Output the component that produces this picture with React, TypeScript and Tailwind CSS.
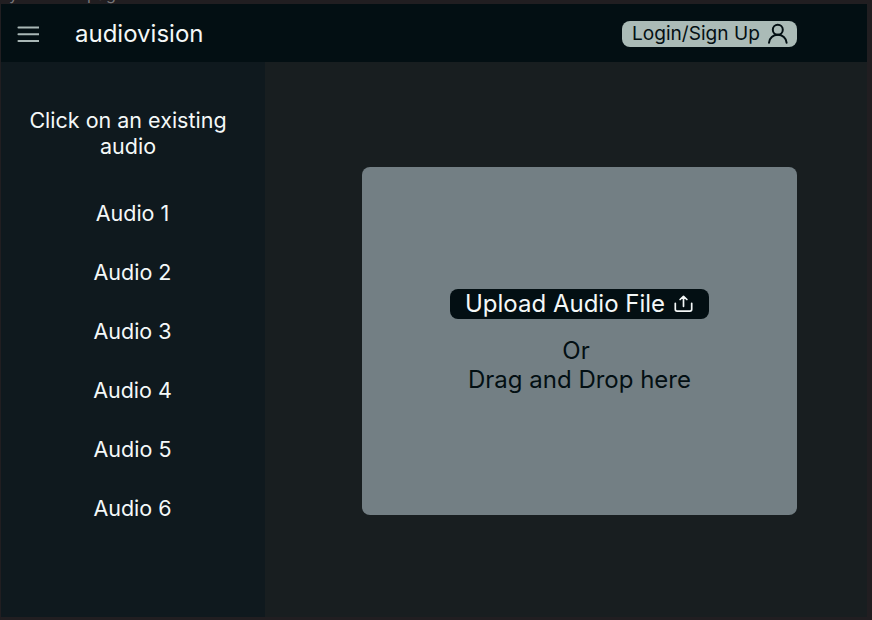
const audios = ['Audio 1', 'Audio 2', 'Audio 3', 'Audio 4', 'Audio 5', 'Audio 6'];

function MenuIcon() {
  return (
    <svg className="h-[18px] w-[24px]" viewBox="0 0 24 18" fill="none" stroke="#a9b8b6" strokeWidth="2.1" strokeLinecap="round">
      <path d="M3.5 2.5H23.5M3.5 9.3H23.5M3.5 16H23.5" />
    </svg>
  );
}

function UserIcon() {
  return (
    <svg className="h-[22px] w-[22px]" viewBox="0 0 22 22" fill="none" stroke="#030f13" strokeWidth="2" strokeLinecap="round">
      <circle cx="10.8" cy="6.8" r="5" />
      <path d="M2 19.8C2.3 15 6.2 11.8 10.8 11.8S19.3 15 19.6 19.8" />
    </svg>
  );
}

function UploadIcon() {
  return (
    <svg className="h-[18px] w-[20px]" viewBox="0 0 20 18" fill="none" stroke="#f4f8f8" strokeWidth="1.7" strokeLinecap="round" strokeLinejoin="round">
      <path d="M10.5 11.3V1.5M7.1 4.5L10.5 1.3L13.9 4.5M2.3 8.3V14.3Q2.3 16.1 4.1 16.1H16.9Q18.7 16.1 18.7 14.3V8.3" />
    </svg>
  );
}

export default function App() {
  return (
    <div className="flex h-[620px] w-[872px] flex-col overflow-hidden bg-[#211e21] pr-[5px] pb-[3px] pl-px font-['Inter',sans-serif]">
      <div className="flex h-[4px] shrink-0 items-end overflow-hidden pl-[8px] text-[16px] leading-[10px] text-[#77767a]">
        <span className="mb-[5px] w-[78px]">y</span>
        <span className="mb-[5px]">page</span>
      </div>
      <header className="flex h-[58px] shrink-0 items-center bg-[#030f13] pt-px pr-[70px] pl-[14px]">
        <MenuIcon />
        <h1 className="ml-[36px] text-[24px] leading-[29px] text-[#f4f8f8]">audiovision</h1>
        <button className="mt-px ml-auto flex h-[26px] w-[175px] items-center rounded-[8px] bg-[#abbbb7] pl-[10px] text-left text-[19.1px] leading-[24px] whitespace-nowrap text-[#030f13]">
          <span className="-mt-[2px] w-[135px]">Login/Sign Up</span>
          <UserIcon />
        </button>
      </header>
      <div className="flex flex-1">
        <aside className="flex w-[264px] flex-col items-center bg-[#0f191e] pt-[45px] text-[21.5px] leading-[26px] text-[#f4f8f8]">
          <p className="mr-[10px] w-[230px] text-center">Click on an existing audio</p>
          <ul className="mt-[41px] mr-px flex flex-col gap-[32px] text-center leading-[27px]">
            {audios.map((audio) => (
              <li key={audio}>{audio}</li>
            ))}
          </ul>
        </aside>
        <main className="flex-1 bg-[#181e20] pt-[105px] pl-[97px]">
          <section className="flex h-[348px] w-[435px] flex-col items-center rounded-[8px] bg-[#737f84] pt-[122px] text-[24px] leading-[29px] text-[#030f13]">
            <button className="flex h-[30px] w-[259px] items-center rounded-[8px] bg-[#030f13] pl-[15px] text-left whitespace-nowrap text-[#f4f8f8]">
              <span className="-mt-[2px] w-[208px]">Upload Audio File</span>
              <UploadIcon />
            </button>
            <p className="mt-[17px] mr-[7px]">Or</p>
            <p>Drag and Drop here</p>
          </section>
        </main>
      </div>
    </div>
  );
}
